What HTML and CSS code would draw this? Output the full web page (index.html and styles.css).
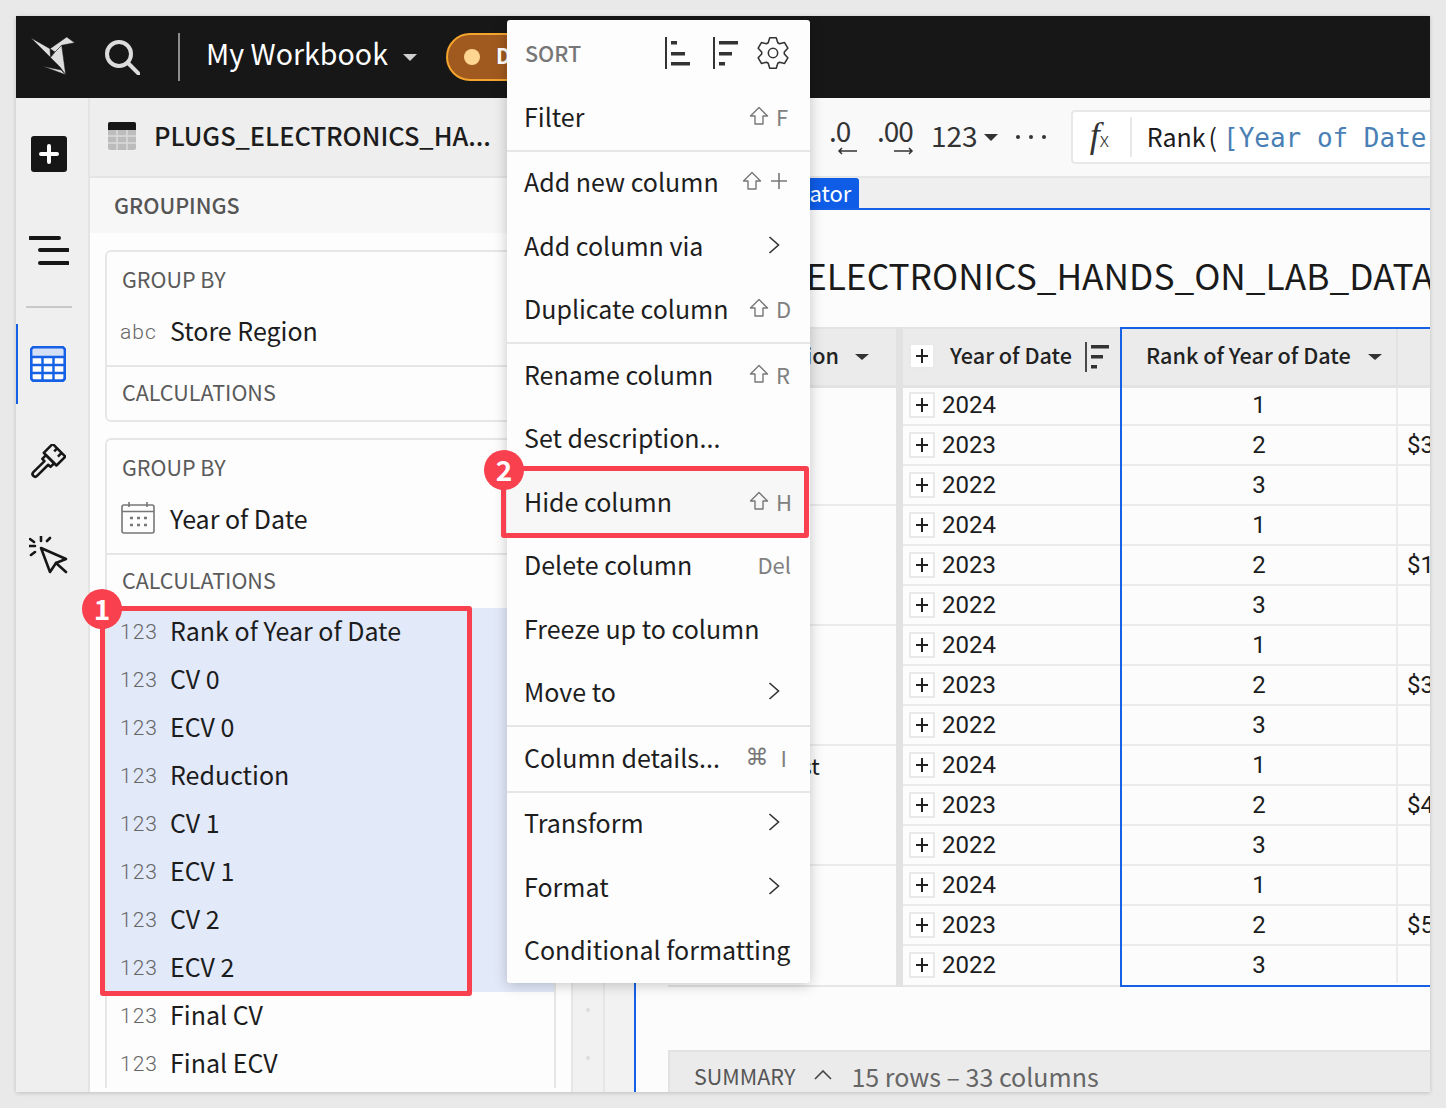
FILE: index.html
```html
<!DOCTYPE html>
<html lang="en">
<head>
<meta charset="utf-8">
<title>My Workbook</title>
<link rel="stylesheet" href="styles.css">
</head>
<body>
<div class="app">
  <header class="topbar">
    <svg class="logo" viewBox="0 0 46 40" width="46" height="40"><g fill="#dedede" stroke="#171717" stroke-width=".5"><polygon points="0.7,0.7 20,11.7 20.5,20.5"/><polygon points="20,11.7 36.7,0 44.7,5.7 31.7,8.3 25,15"/><polygon points="31.7,8.3 35.7,37.7 30,30 20.5,20.5 25,15"/><polygon points="12.7,29.3 31,33 35.7,37.7"/></g></svg>
    <svg class="search" viewBox="0 0 36 36" width="36" height="36"><circle cx="15" cy="15" r="12" fill="none" stroke="#dcdcdc" stroke-width="4"/><path d="M24 24l11 11" stroke="#dcdcdc" stroke-width="4" stroke-linecap="round"/></svg>
    <span class="topdiv"></span>
    <span class="wbname">My Workbook</span>
    <span class="caret caret-light"></span>
    <span class="draft"><i class="dot"></i><b>Draft</b></span>
  </header>
  <div class="body">
    <nav class="rail">
      <span class="addbtn"><svg viewBox="0 0 36 36" width="36" height="36"><rect width="36" height="36" rx="3" fill="#161616"/><path d="M18 10v16M10 18h16" stroke="#fff" stroke-width="4" stroke-linecap="round"/></svg></span>
      <span class="burger"><svg viewBox="0 0 40 32" width="40" height="32"><path d="M1 3h29M11 15h28M11 28h28" stroke="#161616" stroke-width="4" stroke-linecap="round"/></svg></span>
      <span class="raildiv"></span>
      <span class="railtab"><svg viewBox="0 0 36 36" width="36" height="36"><rect x="1.2" y="1.2" width="33.6" height="33.6" rx="3" fill="#fff" stroke="#1660e6" stroke-width="2.4"/><rect x="1.2" y="1.2" width="33.6" height="9" fill="#d5dff5"/><path d="M1 11h34M1 19h34M1 27h34M12.5 11v24M23.5 11v24" stroke="#1660e6" stroke-width="2.4"/><rect x="1.2" y="1.2" width="33.6" height="33.6" rx="3" fill="none" stroke="#1660e6" stroke-width="2.4"/></svg></span>
      <span class="railicon brush"><svg viewBox="-1 -1 38 38" width="40" height="40"><g transform="rotate(45 18 18)" fill="none" stroke="#161616" stroke-width="2.4" stroke-linejoin="round"><path d="M9 0h17v12H9zM15 0v4M21 0v5"/><path d="M12 12h11v5h-3v15a2.5 2.5 0 0 1-5 0V17h-3z"/></g></svg></span>
      <span class="railicon cursor"><svg viewBox="0 0 40 40" width="40" height="40"><path d="M12 12l25 11-10 4-6 9z" fill="none" stroke="#161616" stroke-width="2.6" stroke-linejoin="round"/><path d="M27 27l10 9M12 0v5M21 2l-3 3M1 3l4 3M0 10h6M2 19l4-3" stroke="#161616" stroke-width="2.6" stroke-linecap="round"/></svg></span>
    </nav>
    <aside class="panel">
      <div class="source">
        <svg viewBox="0 0 28 28" width="28" height="28"><rect width="28" height="28" rx="2" fill="#bcbcbc"/><path d="M0 2a2 2 0 0 1 2-2h24a2 2 0 0 1 2 2v6H0z" fill="#161616"/><path d="M0 14h28M0 21h28M9 8v20M19 8v20" stroke="#dadada" stroke-width="1.5"/></svg>
        <span class="sourcename">PLUGS_ELECTRONICS_HA...</span>
      </div>
      <div class="groupings">GROUPINGS</div>
      <div class="cards">
        <section class="card card-a">
          <div class="label">GROUP BY</div>
          <div class="row"><span class="type">abc</span><span>Store Region</span></div>
          <div class="rowgap"></div>
          <div class="label calc">CALCULATIONS</div>
        </section>
        <section class="card card-b">
          <div class="label">GROUP BY</div>
          <div class="row"><span class="type"><svg viewBox="0 0 34 32" width="34" height="32"><rect x="1" y="3" width="32" height="28" rx="2" fill="none" stroke="#777" stroke-width="1.6"/><path d="M1 9.5h32M8 0v5M26 0v5" stroke="#777" stroke-width="1.6"/><path d="M9 16h3M16 16h3M23 16h3M9 23h3M16 23h3M23 23h3" stroke="#777" stroke-width="2.6"/></svg></span><span>Year of Date</span></div>
          <div class="rowgap"></div>
          <div class="label calc">CALCULATIONS</div>
          <div class="row sel"><span class="type">123</span><span>Rank of Year of Date</span></div>
          <div class="row sel"><span class="type">123</span><span>CV 0</span></div>
          <div class="row sel"><span class="type">123</span><span>ECV 0</span></div>
          <div class="row sel"><span class="type">123</span><span>Reduction</span></div>
          <div class="row sel"><span class="type">123</span><span>CV 1</span></div>
          <div class="row sel"><span class="type">123</span><span>ECV 1</span></div>
          <div class="row sel"><span class="type">123</span><span>CV 2</span></div>
          <div class="row sel"><span class="type">123</span><span>ECV 2</span></div>
          <div class="row"><span class="type">123</span><span>Final CV</span></div>
          <div class="row"><span class="type">123</span><span>Final ECV</span></div>
        </section>
      </div>
    </aside>
    <div class="gutter"><div class="strip"><i></i><i></i></div></div>
    <main class="main">
      <div class="toolbar">
        <span class="dec dec-a"><span>.0</span><svg viewBox="0 0 20 8" width="20" height="8"><path d="M20 4H2M5 1L2 4l3 3" fill="none" stroke="#333" stroke-width="1.5"/></svg></span>
        <span class="dec dec-b"><span>.00</span><svg viewBox="0 0 20 8" width="20" height="8"><path d="M0 4h18M15 1l3 3-3 3" fill="none" stroke="#333" stroke-width="1.5"/></svg></span>
        <span class="numfmt">123</span><span class="caret caret-dark"></span>
        <span class="more"><i></i><i></i><i></i></span>
        <div class="formula">
          <span class="fx"><em>f</em><small>x</small></span>
          <span class="fxdiv"></span>
          <span class="ftext">Rank<span class="paren">(</span><code>[Year of Date</code></span>
        </div>
      </div>
      <div class="tabs"><span class="tab">Calculator</span></div>
      <div class="sheet">
        <h1 class="title">PLUGS_ELECTRONICS_HANDS_ON_LAB_DATA</h1>
        <div class="table">
          <div class="col col-region">
            <div class="th"><span class="thtext">Store Region</span><span class="caret caret-dark small"></span></div>
            <div class="grp">Central</div>
            <div class="grp">East</div>
            <div class="grp">Midwest</div>
            <div class="grp">Southwest</div>
            <div class="grp">West</div>
          </div>
          <div class="colsep"></div>
          <div class="col col-year">
            <div class="th"><span class="plus"></span><span class="thtext">Year of Date</span><svg class="thsort" viewBox="0 0 24 30" width="24" height="30"><path d="M1 0v30" stroke="#222" stroke-width="1.6"/><path d="M6 3h18v3.4H6zM6 13h12v3.4H6zM6 23h6v3.4H6z" fill="#333"/></svg></div>
            <div class="td"><span class="plus"></span>2024</div>
            <div class="td"><span class="plus"></span>2023</div>
            <div class="td"><span class="plus"></span>2022</div>
            <div class="td"><span class="plus"></span>2024</div>
            <div class="td"><span class="plus"></span>2023</div>
            <div class="td"><span class="plus"></span>2022</div>
            <div class="td"><span class="plus"></span>2024</div>
            <div class="td"><span class="plus"></span>2023</div>
            <div class="td"><span class="plus"></span>2022</div>
            <div class="td"><span class="plus"></span>2024</div>
            <div class="td"><span class="plus"></span>2023</div>
            <div class="td"><span class="plus"></span>2022</div>
            <div class="td"><span class="plus"></span>2024</div>
            <div class="td"><span class="plus"></span>2023</div>
            <div class="td"><span class="plus"></span>2022</div>
          </div>
          <div class="selected">
            <div class="col col-rank">
              <div class="th"><span class="thtext">Rank of Year of Date</span><span class="caret caret-dark small"></span></div>
              <div class="td">1</div><div class="td">2</div><div class="td">3</div>
              <div class="td">1</div><div class="td">2</div><div class="td">3</div>
              <div class="td">1</div><div class="td">2</div><div class="td">3</div>
              <div class="td">1</div><div class="td">2</div><div class="td">3</div>
              <div class="td">1</div><div class="td">2</div><div class="td">3</div>
            </div>
            <div class="col col-next">
              <div class="th"></div>
              <div class="td"></div><div class="td">$3</div><div class="td"></div>
              <div class="td"></div><div class="td">$1</div><div class="td"></div>
              <div class="td"></div><div class="td">$3</div><div class="td"></div>
              <div class="td"></div><div class="td">$4</div><div class="td"></div>
              <div class="td"></div><div class="td">$5</div><div class="td"></div>
            </div>
          </div>
        </div>
        <div class="summary">
          <span class="sumlabel">SUMMARY</span>
          <svg viewBox="0 0 18 10" width="18" height="10"><path d="M1 9l8-8 8 8" fill="none" stroke="#444" stroke-width="1.6"/></svg>
          <span class="sumtext">15 rows – 33 columns</span>
        </div>
      </div>
    </main>
  </div>

  <div class="menu">
    <div class="mhead">
      <span class="msort">SORT</span>
      <svg class="ms1" viewBox="0 0 26 32" width="26" height="32"><path d="M1 0v32" stroke="#333" stroke-width="2"/><path d="M6 4h6v3.4H6zM6 15h14v3.4H6zM6 25h19v3.4H6z" fill="#333"/></svg>
      <svg class="ms2" viewBox="0 0 26 32" width="26" height="32"><path d="M1 0v32" stroke="#333" stroke-width="2"/><path d="M6 4h19v3.4H6zM6 15h13v3.4H6zM6 25h6v3.4H6z" fill="#333"/></svg>
      <svg class="ms3" viewBox="0 0 24 24" width="34" height="34"><path d="M14.29 1.24L15.38 4.75 16.59 5.45 20.17 4.64 22.46 8.6 19.97 11.3V12.7L22.46 15.4 20.17 19.36 16.59 18.55 15.38 19.25 14.29 22.76H9.71L8.62 19.25 7.41 18.55 3.83 19.36 1.54 15.4 4.03 12.7V11.3L1.54 8.6 3.83 4.64 7.41 5.45 8.62 4.75 9.71 1.24z" fill="none" stroke="#333" stroke-width="1.1" stroke-linejoin="round"/><circle cx="12" cy="12" r="3.3" fill="none" stroke="#333" stroke-width="1.1"/></svg>
    </div>
    <div class="mi">Filter<span class="key key-shift"><svg class="shift" viewBox="0 0 20 20" width="20" height="20"><path d="M10 1.5L18.5 10H14v8H6v-8H1.5z" fill="none" stroke="#777" stroke-width="1.4" stroke-linejoin="round"/></svg>F</span></div>
    <div class="mdiv"></div>
    <div class="mi">Add new column<span class="key"><svg class="shift" viewBox="0 0 20 20" width="20" height="20"><path d="M10 1.5L18.5 10H14v8H6v-8H1.5z" fill="none" stroke="#777" stroke-width="1.4" stroke-linejoin="round"/></svg><svg class="keyplus" viewBox="0 0 16 16" width="16" height="16"><path d="M8 0v16M0 8h16" stroke="#777" stroke-width="1.6"/></svg></span></div>
    <div class="mi">Add column via<svg class="chev" viewBox="0 0 12 20" width="12" height="20"><path d="M1.5 2l9 8-9 8" fill="none" stroke="#333" stroke-width="1.6"/></svg></div>
    <div class="mi">Duplicate column<span class="key key-shift"><svg class="shift" viewBox="0 0 20 20" width="20" height="20"><path d="M10 1.5L18.5 10H14v8H6v-8H1.5z" fill="none" stroke="#777" stroke-width="1.4" stroke-linejoin="round"/></svg>D</span></div>
    <div class="mdiv"></div>
    <div class="mi">Rename column<span class="key key-shift"><svg class="shift" viewBox="0 0 20 20" width="20" height="20"><path d="M10 1.5L18.5 10H14v8H6v-8H1.5z" fill="none" stroke="#777" stroke-width="1.4" stroke-linejoin="round"/></svg>R</span></div>
    <div class="mi">Set description...</div>
    <div class="mi mi-hover">Hide column<span class="key key-shift"><svg class="shift" viewBox="0 0 20 20" width="20" height="20"><path d="M10 1.5L18.5 10H14v8H6v-8H1.5z" fill="none" stroke="#777" stroke-width="1.4" stroke-linejoin="round"/></svg>H</span></div>
    <div class="mi">Delete column<span class="key keydel">Del</span></div>
    <div class="mi">Freeze up to column</div>
    <div class="mi">Move to<svg class="chev" viewBox="0 0 12 20" width="12" height="20"><path d="M1.5 2l9 8-9 8" fill="none" stroke="#333" stroke-width="1.6"/></svg></div>
    <div class="mdiv"></div>
    <div class="mi">Column details...<span class="key"><span class="keycmd">⌘</span><span class="keyi">I</span></span></div>
    <div class="mdiv"></div>
    <div class="mi">Transform<svg class="chev" viewBox="0 0 12 20" width="12" height="20"><path d="M1.5 2l9 8-9 8" fill="none" stroke="#333" stroke-width="1.6"/></svg></div>
    <div class="mi">Format<svg class="chev" viewBox="0 0 12 20" width="12" height="20"><path d="M1.5 2l9 8-9 8" fill="none" stroke="#333" stroke-width="1.6"/></svg></div>
    <div class="mi">Conditional formatting</div>
  </div>

  <div class="mark mark-1"></div>
  <div class="mark mark-2"></div>
  <span class="badge badge-1">1</span>
  <span class="badge badge-2">2</span>
</div>
</body>
</html>
```
FILE: styles.css
```css
* { box-sizing: border-box; }
html, body { margin: 0; height: 100%; }
body {
  background: #e9e9e9;
  padding: 16px;
  font-family: "Noto Sans CJK JP", "Noto Sans", sans-serif;
  color: #1c1c1c;
  overflow: hidden;
}
.app {
  position: relative;
  width: 1414px;
  height: 1076px;
  display: flex;
  flex-direction: column;
  overflow: hidden;
  background: #fcfcfc;
  box-shadow: 0 1px 4px rgba(0,0,0,.18);
}

/* top bar */
.topbar {
  height: 82px;
  flex: none;
  background: #171717;
  display: flex;
  align-items: center;
  padding-left: 14px;
  color: #fff;
}
.logo { margin-right: 28px; flex: none; }
.search { margin-right: 38px; flex: none; }
.topdiv { width: 2px; height: 48px; background: #8d8d8d; margin-right: 26px; flex: none; }
.wbname { font-size: 28.6px; line-height: 40px; margin-right: 15px; padding-bottom: 8px; height: 48px; white-space: nowrap; }
.caret { display: inline-block; width: 0; height: 0; flex: none; border-style: solid; border-color: transparent; border-width: 7px 7px 0; }
.caret-light { border-top-color: #cfcfcf; margin-right: 29px; }
.caret-dark { border-top-color: #333; }
.caret-dark.small { border-width: 6px 7px 0; }
.draft {
  width: 120px; height: 48px; flex: none;
  display: flex; align-items: center;
  background: #a05a1f;
  border: 2px solid #f5a42e;
  border-radius: 24px;
  padding-left: 16px;
}
.dot { width: 16px; height: 16px; border-radius: 50%; background: #ffd592; margin-right: 16px; flex: none; }
.draft b { font-size: 21px; font-weight: 700; line-height: 28px; padding-bottom: 4px; height: 32px; }

/* layout */
.body { flex: 1; display: flex; min-height: 0; }
.rail {
  width: 74px; flex: none;
  background: #efefef;
  border-right: 2px solid #e4e4e4;
  display: flex; flex-direction: column; align-items: center;
  padding-right: 6px;
  position: relative;
}
.addbtn { height: 36px; margin-top: 38px; }
.burger { height: 32px; margin-top: 63px; width: 40px; }
.raildiv { width: 46px; height: 2px; background: #c9c9c9; margin-top: 39px; }
.railtab {
  align-self: stretch; height: 80px; margin-top: 16px;
  border-left: 2px solid #1660e6;
  display: flex; align-items: center; justify-content: center;
  padding-right: 4px;
}
.railicon { height: 40px; }
.brush { margin-top: 40px; margin-left: -6px; }
.cursor { margin-top: 52px; }

/* panel */
.panel { width: 481px; flex: none; background: #fdfdfd; display: flex; flex-direction: column; overflow: hidden; }
.source {
  height: 80px; flex: none;
  background: #eeeeee;
  border-bottom: 2px solid #e4e4e4;
  display: flex; align-items: center;
  padding-left: 18px; padding-bottom: 2px;
  gap: 18px;
}
.sourcename { font-size: 25.4px; font-weight: 500; line-height: 34px; color: #1c1c1c; white-space: nowrap; padding-bottom: 2px; }
.groupings {
  height: 55px; flex: none;
  background: #f7f7f7;
  font-size: 21.5px; font-weight: 500; color: #555;
  line-height: 53px; padding-left: 24px;
}
.cards { padding: 17px 15px 0; flex: 1; min-height: 0; }
.card { border: 2px solid #e6e6e6; border-radius: 6px; background: #fdfdfd; }
.card-a { margin-bottom: 16px; }
.card-b { border-bottom: 0; border-radius: 6px 6px 0 0; }
.label { height: 56px; line-height: 54px; font-size: 21.5px; color: #5a5a5a; padding-left: 15px; }
.label.calc { height: 53px; line-height: 49px; }
.row { height: 48px; display: flex; align-items: center; font-size: 25px; line-height: 36px; color: #1c1c1c; white-space: nowrap; padding-bottom: 4px; }
.type { width: 63px; flex: none; padding: 4px 0 0 13px; font-family: Roboto, sans-serif; font-size: 21px; font-weight: 300; letter-spacing: 1px; color: #666; display: flex; align-items: center; }
.type svg { margin: -4px 0 0 1px; }
.sel { background: #e2e9f9; }
.rowgap { height: 9px; border-bottom: 2px solid #e6e6e6; box-sizing: content-box; }

/* gutter */
.gutter { width: 63px; flex: none; background: #f2f2f2; padding-right: 29px; }
.strip {
  height: 100%;
  border-left: 2px solid #e6e6e6;
  border-right: 2px solid #e6e6e6;
  background: #f1f1f1;
  display: flex; flex-direction: column; align-items: center; justify-content: flex-end;
  gap: 44px; padding-bottom: 32px;
}
.strip i { width: 4px; height: 4px; border-radius: 50%; background: #dcdcdc; }

/* main */
.main { flex: 1; min-width: 0; display: flex; flex-direction: column; overflow: hidden; }
.toolbar {
  height: 80px; flex: none;
  background: #f9f9f9;
  border-bottom: 2px solid #e6e6e6;
  display: flex; align-items: center;
  padding-left: 195px;
  color: #333;
}
.dec { display: flex; flex-direction: column; flex: none; width: 40px; height: 44px; font-size: 28px; line-height: 30px; }
.dec span { display: block; height: 32px; letter-spacing: -1px; }
.dec svg { margin-left: 8px; }
.dec-a { margin-right: 8px; }
.dec-b { margin-right: 14px; }
.dec-b svg { margin-left: 17px; }
.numfmt { font-size: 28px; line-height: 36px; margin-right: 6px; flex: none; padding-bottom: 4px; height: 40px; }
.more { display: flex; gap: 9px; margin-left: 18px; margin-right: 25px; flex: none; }
.more i { width: 4px; height: 4px; border-radius: 50%; background: #333; }
.formula {
  width: 400px; height: 54px; flex: none;
  background: #fff;
  border: 2px solid #e8e8e8; border-right: 0;
  border-radius: 4px 0 0 4px;
  display: flex; align-items: center;
  padding-left: 17px;
  white-space: nowrap;
  overflow: hidden;
}
.fx { font-family: "Liberation Serif", serif; font-size: 36px; width: 40px; color: #333; line-height: 40px; flex: none; }
.fx em { font-style: italic; }
.fx small { font-family: "Noto Sans CJK JP", sans-serif; font-size: 20px; font-weight: 300; }
.fxdiv { width: 2px; height: 40px; background: #e8e8e8; margin-right: 15px; flex: none; }
.ftext { font-size: 25px; line-height: 36px; color: #1c1c1c; }
.paren { margin-left: 3px; margin-right: 6px; }
.ftext code { font-family: "DejaVu Sans Mono", monospace; font-size: 26px; color: #4a7fb5; }
.tabs {
  height: 32px; flex: none;
  background: #efefef;
  border-bottom: 2px solid #1660e6;
  display: flex;
  padding-left: 104px;
}
.tab { background: #0f5ce6; color: #fff; font-size: 22px; line-height: 28px; height: 30px; padding: 0 8px; border-radius: 3px 3px 0 0; }
.sheet {
  flex: 1; min-height: 0;
  display: flex; flex-direction: column;
  border-left: 2px solid #1660e6;
  padding-left: 32px;
  background: #fcfcfc;
}
.title {
  height: 117px; margin: 0; flex: none;
  font-size: 35.3px; font-weight: 400; line-height: 130px;
  color: #1a1a1a;
  white-space: nowrap;
  padding-left: 7px;
}
.table { display: flex; flex: none; height: 660px; width: 800px; }
.col { display: flex; flex-direction: column; flex: none; }
.col-region { width: 228px; border-bottom: 2px solid #e6e6e6; height: 660px; }
.colsep { width: 7px; background: #e2e2e2; flex: none; height: 660px; }
.col-year { width: 217px; border-bottom: 2px solid #e6e6e6; height: 660px; }
.selected { display: flex; flex: 1; border: 2px solid #1660e6; border-right: 0; height: 660px; }
.col-rank { width: 276px; }
.col-next { flex: 1; }
.th {
  height: 58px; flex: none;
  margin-bottom: 1px;
  position: relative; z-index: 1;
  background: #ebebeb;
  border-top: 2px solid #e4e4e4;
  box-shadow: 0 3px 0 #e2e2e2;
  display: flex; align-items: center;
}
.selected .th { height: 56px; border-top: 0; }
.thtext { font-size: 21.6px; font-weight: 500; line-height: 30px; white-space: nowrap; color: #222; padding-bottom: 5px; height: 35px; }
.col-region .th { padding-left: 40px; }
.col-region .caret { margin-left: 16px; }
.col-year .th { padding-left: 6px; }
.col-year .th .plus { margin-right: 15px; margin-top: -2px; }
.thsort { margin-left: 13px; flex: none; }
.col-rank .th { padding-left: 24px; border-right: 2px solid #e2e2e2; }
.col-rank .caret { margin-left: 17px; }
.grp {
  height: 120px; flex: none;
  border-bottom: 2px solid #ebebeb;
  padding-left: 40px;
  font-size: 22.5px; line-height: 38px;
  white-space: nowrap;
}
.grp:last-child { border-bottom: 0; height: 117px; }
.td {
  height: 40px; flex: none;
  border-bottom: 2px solid #ebebeb;
  display: flex; align-items: center;
  font-family: Roboto, sans-serif; font-size: 24px; font-weight: 400; color: #1c1c1c;
}
.col-year .td { padding-left: 6px; gap: 7px; }
.col-year .td:last-child { border-bottom: 0; height: 39px; padding-bottom: 1px; }
.col-rank .td { justify-content: center; border-right: 2px solid #ececec; }
.col-next .td { padding-left: 9px; }
.selected .td:last-child { border-bottom: 0; height: 37px; }
.plus {
  width: 26px; height: 26px; flex: none;
  background: #fff;
  border: 2px solid #e9e9e9;
  position: relative;
}
.plus::before, .plus::after { content: ""; position: absolute; background: #222; }
.plus::before { left: 5px; right: 5px; top: 10px; height: 2px; }
.plus::after { top: 4px; bottom: 4px; left: 10px; width: 2px; }
.summary {
  height: 58px; margin-top: 63px; flex: none;
  background: #ebebeb;
  border-top: 2px solid #e2e2e2;
  border-left: 2px solid #e2e2e2;
  display: flex; align-items: flex-start;
  padding: 10px 0 0 24px;
  white-space: nowrap;
}
.summary svg { margin: 8px 19px 0 19px; flex: none; }
.sumlabel { font-size: 21.5px; line-height: 28px; color: #555; }
.sumtext { font-size: 25px; line-height: 28px; color: #666; }

/* column menu */
.menu {
  position: absolute; left: 491px; top: 4px;
  width: 303px; height: 963px;
  background: #fdfdfd;
  border-radius: 3px;
  box-shadow: 0 2px 14px rgba(0,0,0,.22);
  z-index: 5;
}
.mhead { height: 66px; display: flex; align-items: center; padding-left: 18px; position: relative; }
.msort { font-size: 21.5px; font-weight: 500; color: #777; line-height: 30px; width: 140px; flex: none; }
.ms1 { margin-right: 22px; flex: none; }
.ms2 { margin-right: 17px; flex: none; }
.ms3 { flex: none; }
.mi {
  height: 63.5px;
  display: flex; align-items: center; justify-content: space-between;
  padding: 0 20px 4px 17px;
  font-size: 25px; line-height: 36px; color: #1e1e1e;
  white-space: nowrap;
}
.mi-hover { background: #f7f7f7; }
.mdiv { height: 2px; background: #e6e6e6; }
.key { display: flex; align-items: center; gap: 9px; font-size: 22px; color: #808080; font-weight: 400; }
.key-shift { width: 41px; gap: 7px; }
.shift { flex: none; }
.keyplus { margin-right: 3px; }
.keydel { margin-right: -1px; }
.keycmd { font-family: "DejaVu Sans", sans-serif; font-size: 23px; color: #777; }
.keyi { margin-left: 3px; margin-right: 3px; }
.chev { margin-right: 10px; }

/* annotations */
.mark {
  position: absolute;
  border: 5px solid #f8404f;
  border-radius: 3px;
  z-index: 6;
}
.mark-1 { left: 84px; top: 590px; width: 372px; height: 390px; }
.mark-2 { left: 485px; top: 450px; width: 308px; height: 72px; }
.badge {
  position: absolute;
  width: 40px; height: 40px; border-radius: 50%;
  background: #f8404f; color: #fff;
  font-size: 28px; font-weight: 700; line-height: 38px; text-align: center;
  z-index: 7;
}
.badge-1 { left: 66px; top: 573px; }
.badge-2 { left: 468px; top: 434px; }
```
